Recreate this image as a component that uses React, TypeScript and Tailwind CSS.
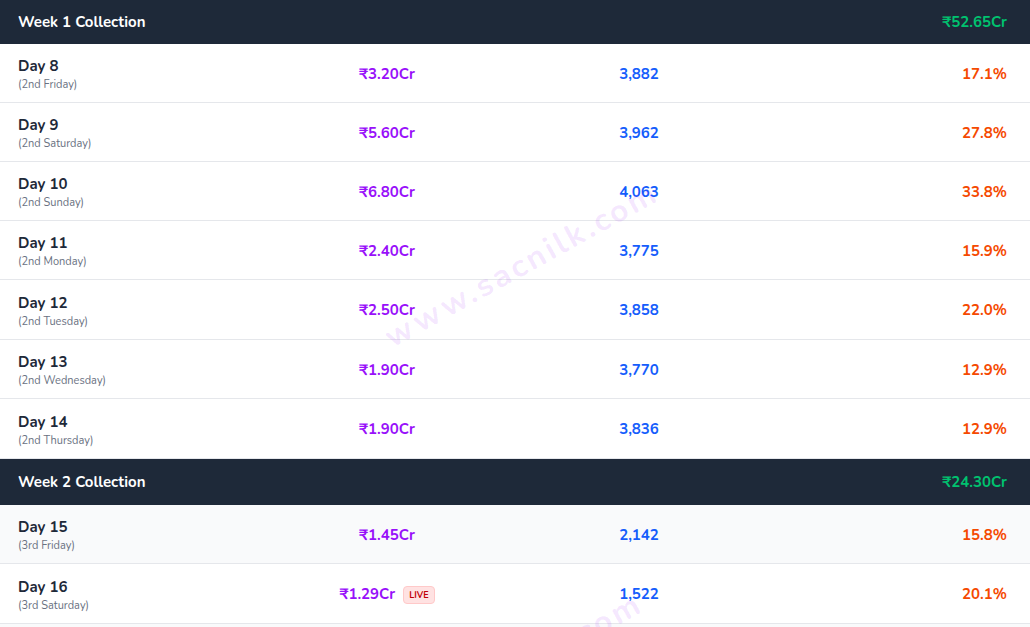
import React from "react";

type Row = { day: string; sub: string; amt: string; shows: string; occ: string; live?: boolean; h: string };

const week1: Row[] = [
  { day: "Day 8", sub: "(2nd Friday)", amt: "₹3.20Cr", shows: "3,882", occ: "17.1%", h: "h-[59px]" },
  { day: "Day 9", sub: "(2nd Saturday)", amt: "₹5.60Cr", shows: "3,962", occ: "27.8%", h: "h-[59px]" },
  { day: "Day 10", sub: "(2nd Sunday)", amt: "₹6.80Cr", shows: "4,063", occ: "33.8%", h: "h-[59px]" },
  { day: "Day 11", sub: "(2nd Monday)", amt: "₹2.40Cr", shows: "3,775", occ: "15.9%", h: "h-[59px]" },
  { day: "Day 12", sub: "(2nd Tuesday)", amt: "₹2.50Cr", shows: "3,858", occ: "22.0%", h: "h-[60px]" },
  { day: "Day 13", sub: "(2nd Wednesday)", amt: "₹1.90Cr", shows: "3,770", occ: "12.9%", h: "h-[59px]" },
  { day: "Day 14", sub: "(2nd Thursday)", amt: "₹1.90Cr", shows: "3,836", occ: "12.9%", h: "h-[60px]" },
];

const week2: Row[] = [
  { day: "Day 15", sub: "(3rd Friday)", amt: "₹1.45Cr", shows: "2,142", occ: "15.8%", h: "h-[59px]" },
  { day: "Day 16", sub: "(3rd Saturday)", amt: "₹1.29Cr", shows: "1,522", occ: "20.1%", live: true, h: "h-[60px]" },
];

function Header({ title, total, h }: { title: string; total: string; h: string }) {
  return (
    <div className={`flex items-center justify-between bg-[#1e2939] pl-[18px] pr-[23px] ${h}`}>
      <span className="text-[15px] font-bold text-white">{title}</span>
      <span className="text-[15px] font-bold text-[#00c26f]">{total}</span>
    </div>
  );
}

function DayRow({ r, alt }: { r: Row; alt?: boolean }) {
  return (
    <div
      className={`grid grid-cols-[260px_254px_250px_1fr] items-center border-b border-[#e5e7eb] pt-[2px] ${r.h} ${
        alt ? "bg-[#f9fafb]" : "bg-white"
      }`}
    >
      <div className="flex flex-col pl-[18px]">
        <span className="text-[15px] font-bold leading-[20px] text-[#1e2939]">{r.day}</span>
        <span className="mt-[1px] text-[11px] leading-[15px] text-[#6a7282]">{r.sub}</span>
      </div>
      <div className="flex items-center justify-center gap-2">
        <span className="text-[15px] font-bold text-[#9810fa]">{r.amt}</span>
        {r.live && (
          <span className="rounded-[4px] border border-[#ffc9c9] bg-[#ffe2e2] px-[5px] py-[1px] text-[9px] font-bold leading-[14px] text-[#c10007]">
            LIVE
          </span>
        )}
      </div>
      <div className="text-center text-[15px] font-bold text-[#155dfc]">{r.shows}</div>
      <div className="pr-[23px] text-right text-[15px] font-bold text-[#f54900]">{r.occ}</div>
    </div>
  );
}

export default function App() {
  return (
    <div
      className="relative h-[627px] w-[1030px] overflow-hidden bg-white"
      style={{ fontFamily: "Nunito, Lato, 'Noto Sans', sans-serif" }}
    >
      <Header title="Week 1 Collection" total="₹52.65Cr" h="h-[44px]" />
      {week1.map((r) => (
        <DayRow key={r.day} r={r} />
      ))}
      <Header title="Week 2 Collection" total="₹24.30Cr" h="h-[46px]" />
      {week2.map((r, i) => (
        <DayRow key={r.day} r={r} alt={i % 2 === 0} />
      ))}
      <div className="h-[60px] bg-[#f9fafb]" />

      <div className="pointer-events-none absolute left-[368px] top-[241px] -rotate-[29deg] select-none text-[32px] font-bold tracking-[3px] text-[#9810fa]/10">
        www.sacnilk.com
      </div>
      <div className="pointer-events-none absolute left-[352px] top-[652px] -rotate-[29deg] select-none text-[32px] font-bold tracking-[3px] text-[#9810fa]/10">
        www.sacnilk.com
      </div>
    </div>
  );
}
